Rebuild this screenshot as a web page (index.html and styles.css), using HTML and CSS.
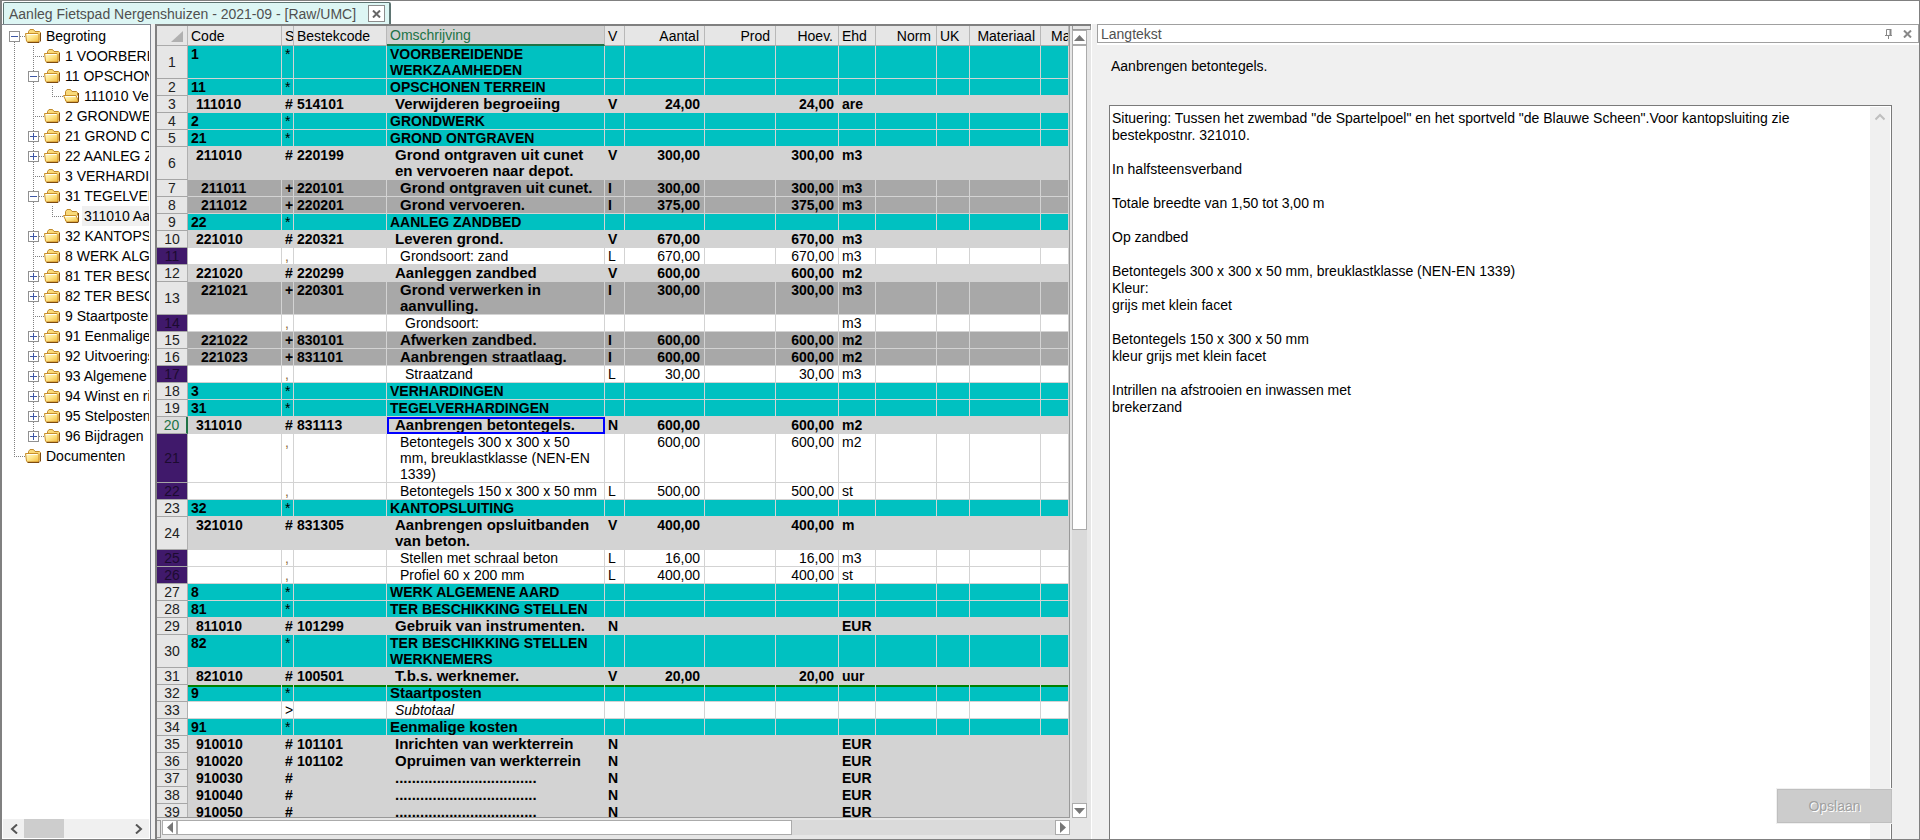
FILE: index.html
```html
<!DOCTYPE html>
<html lang="nl">
<head>
<meta charset="utf-8">
<title>Aanleg Fietspad Nergenshuizen - 2021-09 - [Raw/UMC]</title>
<link rel="stylesheet" href="styles.css">
</head>
<body>
<svg class="defs" aria-hidden="true">
  <defs>
    <linearGradient id="gold" x1="0" y1="0" x2="1" y2="1">
      <stop offset="0" stop-color="#fffbd8"/><stop offset=".5" stop-color="#fde488"/><stop offset="1" stop-color="#f2b93a"/>
    </linearGradient>
    <symbol id="folder" viewBox="0 0 17 14">
      <path d="M3.5 10.500V2.500L5 .5h3.500L10 2.500h4.500l1 1v8" fill="#f9d978" stroke="#c08a2a"/>
      <path d="M.5 4.500h12.500l1 1v6.500l-1 1H2.500l-1-1z" fill="url(#gold)" stroke="#c98f28"/>
      <path d="M2.500 13.500H14l1.500-1.500V4" fill="none" stroke="#7d4a10"/>
      <path d="M2 5.500h10.500" stroke="#fffef0"/>
    </symbol>
    <symbol id="folder-open" viewBox="0 0 17 14">
      <path d="M2.500 12V2.500L4 .5h3.500L9 2.500h4.500l1 1v3" fill="#f9d978" stroke="#c08a2a"/>
      <path d="M.5 6.500h12.500l2.500 5.500-1 1H3.500z" fill="url(#gold)" stroke="#c98f28"/>
      <path d="M3.500 13.500H15l.5-1.500V4" fill="none" stroke="#7d4a10"/>
      <path d="M2 7.500h10.500" stroke="#fffef0"/>
    </symbol>
  </defs>
</svg>
<div class="app">
  <header class="tabs">
    <div class="tab">
      <span class="tab-title">Aanleg Fietspad Nergenshuizen - 2021-09 - [Raw/UMC]</span>
      <button class="tab-close" aria-label="Sluiten"><svg width="9" height="8" viewBox="0 0 9 8"><path d="M1 0.500l7 7M8 .5l-7 7" stroke="#666" stroke-width="2"/></svg></button>
    </div>
  </header>
  <main class="panes">
    <nav class="tree" aria-label="Begroting">
      <div class="tree-view">
        <ul class="root">
          <li><div class="node"><button class="toggle" aria-label="Inklappen"></button><i class="dots short"></i><svg class="icon"><use href="#folder"/></svg><span>Begroting</span></div>
            <ul class="level">
              <li><div class="node"><i class="dots"></i><svg class="icon"><use href="#folder"/></svg><span>1 VOORBEREIDENDE</span></div></li>
              <li><div class="node"><button class="toggle" aria-label="Inklappen"></button><i class="dots short"></i><svg class="icon"><use href="#folder"/></svg><span>11 OPSCHONEN TERREIN</span></div>
                <ul class="level"><li><div class="node"><i class="dots"></i><svg class="icon"><use href="#folder-open"/></svg><span>111010 Verwijderen</span></div></li></ul></li>
              <li><div class="node"><i class="dots"></i><svg class="icon"><use href="#folder"/></svg><span>2 GRONDWERK</span></div></li>
              <li><div class="node"><button class="toggle plus" aria-label="Uitklappen"></button><i class="dots short"></i><svg class="icon"><use href="#folder"/></svg><span>21 GROND ONTGRAVEN</span></div></li>
              <li><div class="node"><button class="toggle plus" aria-label="Uitklappen"></button><i class="dots short"></i><svg class="icon"><use href="#folder"/></svg><span>22 AANLEG ZANDBED</span></div></li>
              <li><div class="node"><i class="dots"></i><svg class="icon"><use href="#folder"/></svg><span>3 VERHARDINGEN</span></div></li>
              <li><div class="node"><button class="toggle" aria-label="Inklappen"></button><i class="dots short"></i><svg class="icon"><use href="#folder"/></svg><span>31 TEGELVERHARDINGEN</span></div>
                <ul class="level"><li><div class="node"><i class="dots"></i><svg class="icon"><use href="#folder-open"/></svg><span class="current">311010 Aanbrengen</span></div></li></ul></li>
              <li><div class="node"><button class="toggle plus" aria-label="Uitklappen"></button><i class="dots short"></i><svg class="icon"><use href="#folder"/></svg><span>32 KANTOPSLUITING</span></div></li>
              <li><div class="node"><i class="dots"></i><svg class="icon"><use href="#folder"/></svg><span>8 WERK ALGEMENE AARD</span></div></li>
              <li><div class="node"><button class="toggle plus" aria-label="Uitklappen"></button><i class="dots short"></i><svg class="icon"><use href="#folder"/></svg><span>81 TER BESCHIKKING</span></div></li>
              <li><div class="node"><button class="toggle plus" aria-label="Uitklappen"></button><i class="dots short"></i><svg class="icon"><use href="#folder"/></svg><span>82 TER BESCHIKKING</span></div></li>
              <li><div class="node"><i class="dots"></i><svg class="icon"><use href="#folder"/></svg><span>9 Staartposten</span></div></li>
              <li><div class="node"><button class="toggle plus" aria-label="Uitklappen"></button><i class="dots short"></i><svg class="icon"><use href="#folder"/></svg><span>91 Eenmalige kosten</span></div></li>
              <li><div class="node"><button class="toggle plus" aria-label="Uitklappen"></button><i class="dots short"></i><svg class="icon"><use href="#folder"/></svg><span>92 Uitvoeringskosten</span></div></li>
              <li><div class="node"><button class="toggle plus" aria-label="Uitklappen"></button><i class="dots short"></i><svg class="icon"><use href="#folder"/></svg><span>93 Algemene kosten</span></div></li>
              <li><div class="node"><button class="toggle plus" aria-label="Uitklappen"></button><i class="dots short"></i><svg class="icon"><use href="#folder"/></svg><span>94 Winst en risico</span></div></li>
              <li><div class="node"><button class="toggle plus" aria-label="Uitklappen"></button><i class="dots short"></i><svg class="icon"><use href="#folder"/></svg><span>95 Stelposten</span></div></li>
              <li><div class="node"><button class="toggle plus" aria-label="Uitklappen"></button><i class="dots short"></i><svg class="icon"><use href="#folder"/></svg><span>96 Bijdragen</span></div></li>
            </ul></li>
          <li><div class="node"><i class="dots"></i><svg class="icon"><use href="#folder"/></svg><span>Documenten</span></div></li>
        </ul>
      </div>
      <div class="tree-scroll">
        <button aria-label="Links"><svg width="8" height="10" viewBox="0 0 8 10"><path d="M7 0.500L2 5l5 4.500" fill="none" stroke="#555" stroke-width="2"/></svg></button>
        <div class="tree-track"><div class="tree-thumb"></div></div>
        <button aria-label="Rechts"><svg width="8" height="10" viewBox="0 0 8 10"><path d="M1 0.500L6 5l-5 4.500" fill="none" stroke="#555" stroke-width="2"/></svg></button>
      </div>
    </nav>
    <div class="gutter"></div>
    <section class="sheet" aria-label="Begrotingsregels">
      <div class="sheet-view">
        <table>
          <colgroup><col class="c-nr"><col class="c-code"><col class="c-s"><col class="c-bestek"><col class="c-oms"><col class="c-v"><col class="c-aantal"><col class="c-prod"><col class="c-hoev"><col class="c-ehd"><col class="c-norm"><col class="c-uk"><col class="c-prod"><col></colgroup>
          <thead>
            <tr><th class="corner"><svg width="12" height="11" viewBox="0 0 12 11"><path d="M12 0v11H0z" fill="#b0b0b0"/></svg></th><th>Code</th><th class="tight">S</th><th>Bestekcode</th><th class="active">Omschrijving</th><th>V</th><th class="num">Aantal</th><th class="num">Prod</th><th class="num">Hoev.</th><th>Ehd</th><th class="num">Norm</th><th>UK</th><th class="num">Materiaal</th><th class="last">Ma</th></tr>
          </thead>
          <tbody>
            <tr class="chapter"><th>1<td>1<td>*<td><td>VOORBEREIDENDE WERKZAAMHEDEN<td><td><td><td><td><td><td><td><td></tr>
            <tr class="chapter"><th>2<td>11<td>*<td><td>OPSCHONEN TERREIN<td><td><td><td><td><td><td><td><td></tr>
            <tr class="item"><th>3<td>111010<td>#<td>514101<td>Verwijderen begroeiing<td>V<td>24,00<td><td>24,00<td>are<td><td><td><td></tr>
            <tr class="chapter"><th>4<td>2<td>*<td><td>GRONDWERK<td><td><td><td><td><td><td><td><td></tr>
            <tr class="chapter"><th>5<td>21<td>*<td><td>GROND ONTGRAVEN<td><td><td><td><td><td><td><td><td></tr>
            <tr class="item"><th>6<td>211010<td>#<td>220199<td>Grond ontgraven uit cunet en vervoeren naar depot.<td>V<td>300,00<td><td>300,00<td>m3<td><td><td><td></tr>
            <tr class="item sub"><th>7<td>211011<td>+<td>220101<td>Grond ontgraven uit cunet.<td>I<td>300,00<td><td>300,00<td>m3<td><td><td><td></tr>
            <tr class="item sub"><th>8<td>211012<td>+<td>220201<td>Grond vervoeren.<td>I<td>375,00<td><td>375,00<td>m3<td><td><td><td></tr>
            <tr class="chapter"><th>9<td>22<td>*<td><td>AANLEG ZANDBED<td><td><td><td><td><td><td><td><td></tr>
            <tr class="item"><th>10<td>221010<td>#<td>220321<td>Leveren grond.<td>V<td>670,00<td><td>670,00<td>m3<td><td><td><td></tr>
            <tr class="detail"><th>11<td><td>,<td><td>Grondsoort: zand<td>L<td>670,00<td><td>670,00<td>m3<td><td><td><td></tr>
            <tr class="item"><th>12<td>221020<td>#<td>220299<td>Aanleggen zandbed<td>V<td>600,00<td><td>600,00<td>m2<td><td><td><td></tr>
            <tr class="item sub"><th>13<td>221021<td>+<td>220301<td>Grond verwerken in aanvulling.<td>I<td>300,00<td><td>300,00<td>m3<td><td><td><td></tr>
            <tr class="detail deep"><th>14<td><td>,<td><td>Grondsoort:<td><td><td><td><td>m3<td><td><td><td></tr>
            <tr class="item sub"><th>15<td>221022<td>+<td>830101<td>Afwerken zandbed.<td>I<td>600,00<td><td>600,00<td>m2<td><td><td><td></tr>
            <tr class="item sub"><th>16<td>221023<td>+<td>831101<td>Aanbrengen straatlaag.<td>I<td>600,00<td><td>600,00<td>m2<td><td><td><td></tr>
            <tr class="detail deep"><th>17<td><td>,<td><td>Straatzand<td>L<td>30,00<td><td>30,00<td>m3<td><td><td><td></tr>
            <tr class="chapter"><th>18<td>3<td>*<td><td>VERHARDINGEN<td><td><td><td><td><td><td><td><td></tr>
            <tr class="chapter"><th>19<td>31<td>*<td><td>TEGELVERHARDINGEN<td><td><td><td><td><td><td><td><td></tr>
            <tr class="item chosen"><th>20<td>311010<td>#<td>831113<td>Aanbrengen betontegels.<td>N<td>600,00<td><td>600,00<td>m2<td><td><td><td></tr>
            <tr class="detail"><th>21<td><td>,<td><td>Betontegels 300 x 300 x 50 mm, breuklastklasse (NEN-EN 1339)<td><td>600,00<td><td>600,00<td>m2<td><td><td><td></tr>
            <tr class="detail"><th>22<td><td>,<td><td>Betontegels 150 x 300 x 50 mm<td>L<td>500,00<td><td>500,00<td>st<td><td><td><td></tr>
            <tr class="chapter"><th>23<td>32<td>*<td><td>KANTOPSLUITING<td><td><td><td><td><td><td><td><td></tr>
            <tr class="item"><th>24<td>321010<td>#<td>831305<td>Aanbrengen opsluitbanden van beton.<td>V<td>400,00<td><td>400,00<td>m<td><td><td><td></tr>
            <tr class="detail"><th>25<td><td>,<td><td>Stellen met schraal beton<td>L<td>16,00<td><td>16,00<td>m3<td><td><td><td></tr>
            <tr class="detail"><th>26<td><td>,<td><td>Profiel 60 x 200 mm<td>L<td>400,00<td><td>400,00<td>st<td><td><td><td></tr>
            <tr class="chapter"><th>27<td>8<td>*<td><td>WERK ALGEMENE AARD<td><td><td><td><td><td><td><td><td></tr>
            <tr class="chapter"><th>28<td>81<td>*<td><td>TER BESCHIKKING STELLEN<td><td><td><td><td><td><td><td><td></tr>
            <tr class="item"><th>29<td>811010<td>#<td>101299<td>Gebruik van instrumenten.<td>N<td><td><td><td>EUR<td><td><td><td></tr>
            <tr class="chapter"><th>30<td>82<td>*<td><td>TER BESCHIKKING STELLEN WERKNEMERS<td><td><td><td><td><td><td><td><td></tr>
            <tr class="item"><th>31<td>821010<td>#<td>100501<td>T.b.s. werknemer.<td>V<td>20,00<td><td>20,00<td>uur<td><td><td><td></tr>
            <tr class="chapter mixed ruled"><th>32<td>9<td>*<td><td>Staartposten<td><td><td><td><td><td><td><td><td></tr>
            <tr class="subtotal"><th>33<td><td>&gt;<td><td>Subtotaal<td><td><td><td><td><td><td><td><td></tr>
            <tr class="chapter mixed"><th>34<td>91<td>*<td><td>Eenmalige kosten<td><td><td><td><td><td><td><td><td></tr>
            <tr class="item"><th>35<td>910010<td>#<td>101101<td>Inrichten van werkterrein<td>N<td><td><td><td>EUR<td><td><td><td></tr>
            <tr class="item"><th>36<td>910020<td>#<td>101102<td>Opruimen van werkterrein<td>N<td><td><td><td>EUR<td><td><td><td></tr>
            <tr class="item"><th>37<td>910030<td>#<td><td>..................................<td>N<td><td><td><td>EUR<td><td><td><td></tr>
            <tr class="item"><th>38<td>910040<td>#<td><td>..................................<td>N<td><td><td><td>EUR<td><td><td><td></tr>
            <tr class="item"><th>39<td>910050<td>#<td><td>..................................<td>N<td><td><td><td>EUR<td><td><td><td></tr>
          </tbody>
        </table>
      </div>
      <div class="vbar">
        <div class="split-h"></div>
        <button aria-label="Omhoog"><svg width="11" height="6" viewBox="0 0 11 6"><path d="M0 6L5.500 0 11 6z" fill="#777"/></svg></button>
        <div class="vtrack"><div class="vthumb"></div></div>
        <button aria-label="Omlaag"><svg width="11" height="6" viewBox="0 0 11 6"><path d="M0 0l5.500 6L11 0z" fill="#777"/></svg></button>
      </div>
      <div class="hbar">
        <div class="split-v"></div>
        <button aria-label="Naar links"><svg width="6" height="11" viewBox="0 0 6 11"><path d="M6 0L0 5.500 6 11z" fill="#777"/></svg></button>
        <div class="htrack"><div class="hthumb"></div></div>
        <button aria-label="Naar rechts"><svg width="6" height="11" viewBox="0 0 6 11"><path d="M0 0l6 5.500L0 11z" fill="#777"/></svg></button>
      </div>
    </section>
    <aside class="side">
      <div class="side-head">
        <span>Langtekst</span>
        <button aria-label="Vastzetten"><svg width="8" height="10" viewBox="0 0 8 10"><path d="M1.500 6V.5h4V6M0 6.500h7M3.500 6.500V10" fill="none" stroke="#888"/><path d="M5.500 0v6" stroke="#888" stroke-width="2"/></svg></button>
        <button aria-label="Sluiten"><svg width="9" height="8" viewBox="0 0 9 8"><path d="M1 0.500l7 7M8 .5l-7 7" stroke="#888" stroke-width="2"/></svg></button>
      </div>
      <div class="side-body">
        <label class="side-label" for="langtekst">Aanbrengen betontegels.</label>
        <div class="editor">
          <textarea id="langtekst" spellcheck="false">Situering: Tussen het zwembad "de Spartelpoel" en het sportveld "de Blauwe Scheen".Voor kantopsluiting zie bestekpostnr. 321010.

In halfsteensverband

Totale breedte van 1,50 tot 3,00 m

Op zandbed

Betontegels 300 x 300 x 50 mm, breuklastklasse (NEN-EN 1339)
Kleur:
grijs met klein facet

Betontegels 150 x 300 x 50 mm
kleur grijs met klein facet

Intrillen na afstrooien en inwassen met
brekerzand</textarea>
          <div class="editor-bar"><svg width="10" height="8" viewBox="0 0 10 8"><path d="M.5 6.500L5 2l4.500 4.500" fill="none" stroke="#bfbfbf" stroke-width="2"/></svg></div>
          <button class="save" disabled>Opslaan</button>
        </div>
      </div>
    </aside>
  </main>
</div>
</body>
</html>
```
FILE: styles.css
```css
* { box-sizing: border-box; }

body {
  margin: 0;
  font: 14px/16px "Liberation Sans", Arial, sans-serif;
  color: #000;
  background: #fff;
}

button {
  display: flex;
  align-items: center;
  justify-content: center;
  padding: 0;
  border: 0;
  background: none;
  font: inherit;
}

.defs { position: absolute; width: 0; height: 0; }

.app {
  display: flex;
  flex-direction: column;
  height: 100vh;
  border: 1px solid #808080;
  border-left-width: 2px;
  overflow: hidden;
}

/* Document tabs */
.tabs {
  display: flex;
  flex: 0 0 23px;
  padding: 1px 1px 0;
}
.tab {
  display: flex;
  align-items: center;
  gap: 12px;
  padding: 0 4px 0 5px;
  background: #ddf6f4;
  border: 1px solid #5f7573;
  border-width: 1px 2px 0 1px;
  border-radius: 2px 2px 0 0;
}
.tab-title { color: #505050; white-space: nowrap; }
.tab-close {
  width: 17px;
  height: 17px;
  border: 1px solid #8c8c8c;
  background: #fff;
}

.panes {
  flex: 1;
  min-height: 0;
  display: grid;
  grid-template-columns: 149px 4px minmax(0, 936fr) minmax(0, 828fr);
  grid-template-rows: minmax(0, 1fr);
}
.gutter { background: #f0f0f0; }

/* Tree */
.tree {
  display: flex;
  flex-direction: column;
  min-width: 0;
  min-height: 0;
  border: 1px solid #828790;
  border-width: 1px 1px 0 0;
  padding: 1px;
}
.tree-view { flex: 1; overflow: hidden; padding-left: 6px; }
.tree ul {
  margin: 0;
  padding: 0;
  list-style: none;
  background: repeating-linear-gradient(#808080 0 1px, transparent 1px 2px) 5px 0 / 1px calc(100% - 10px) no-repeat;
}
.tree .level { margin-left: 19px; }
.tree .root { background-position: 5px 10px; background-size: 1px calc(100% - 20px); }
.node {
  display: flex;
  align-items: center;
  height: 20px;
  white-space: nowrap;
}
.node span {
  min-width: 0;
  margin-left: 2px;
  padding: 2px 0 2px 2px;
  overflow: hidden;
}
.node .current { background: #f0f0f0; }
.toggle {
  flex: none;
  width: 11px;
  height: 11px;
  border: 1px solid #919191;
  background: linear-gradient(90deg, #3d57a5, #3d57a5) center / 7px 1px no-repeat #fff;
}
.toggle.plus {
  background: linear-gradient(#3d57a5, #3d57a5) center / 7px 1px no-repeat, linear-gradient(#3d57a5, #3d57a5) center / 1px 7px no-repeat #fff;
}
.dots {
  flex: none;
  width: 11px;
  height: 1px;
  margin-left: 5px;
  background: repeating-linear-gradient(90deg, #808080 0 1px, transparent 1px 2px);
}
.dots.short { width: 5px; margin-left: 0; }
.icon { flex: none; width: 17px; height: 14px; }

.tree-scroll { display: flex; height: 19px; background: #f0f0f0; }
.tree-scroll button { width: 21px; }
.tree-track { flex: 1; }
.tree-thumb { width: 38%; height: 100%; background: #cdcdcd; }

/* Spreadsheet */
.sheet {
  display: grid;
  grid-template-columns: minmax(0, 1fr) 21px;
  grid-template-rows: minmax(0, 1fr) 21px;
  border: 2px solid #808080;
  border-width: 2px 0 0 2px;
  background: #e6e6e6;
}
.sheet-view {
  overflow: hidden;
  border: 1px solid #999;
  border-width: 0 1px 1px 0;
}
table {
  width: 100%;
  table-layout: fixed;
  border-collapse: separate;
  border-spacing: 0;
}
.c-nr { width: 31px; }
.c-code { width: 94px; }
.c-s { width: 12px; }
.c-bestek { width: 93px; }
.c-oms { width: 218px; }
.c-v { width: 20px; }
.c-aantal { width: 80px; }
.c-prod { width: 71px; }
.c-hoev { width: 63px; }
.c-ehd { width: 37px; }
.c-norm { width: 61px; }
.c-uk { width: 33px; }

th, td { padding: 0 3px; text-align: left; overflow: hidden; }
th { font-weight: normal; background: #e6e6e6; }
thead th {
  height: 20px;
  border-right: 1px solid #b8b8b8;
  border-bottom: 1px solid #ababab;
  white-space: nowrap;
}
thead .corner { padding: 2px 4px 0; text-align: right; }
thead .tight { padding-right: 0; }
thead .num { text-align: right; padding-right: 5px; }
thead .last { padding-left: 10px; padding-right: 0; }
thead .active {
  color: #217346;
  background: #d2d2d2;
  border-bottom: 2px solid #217346;
}
tbody tr { height: 17px; }
tbody th {
  text-align: center;
  color: #222;
  border-right: 1px solid #b0b0b0;
  border-bottom: 1px solid #a6a6a6;
}
td {
  vertical-align: top;
  background: #fff;
  border-right: 1px solid #d3d3d3;
  border-bottom: 1px solid #d3d3d3;
}
td:nth-child(3) { padding-right: 0; }
td:nth-child(7), td:nth-child(9) { text-align: right; padding-right: 4px; }

.chapter td { background: #00c1c1; font-weight: bold; }
.chapter td:nth-child(3) { font-weight: normal; }
.item td { background: #d3d3d3; font-weight: bold; }
.item td:nth-child(2), .item td:nth-child(5) { padding-left: 8px; }
.item td:nth-child(5), .mixed td:nth-child(5) { font-size: 15px; }
.sub td { background: #a8a8a8; }
.sub td:nth-child(2), .sub td:nth-child(5), .detail td:nth-child(5) { padding-left: 13px; }
.detail td:nth-child(5) { padding-right: 5px; }
.deep td:nth-child(5) { padding-left: 18px; }
.detail td:nth-child(3) { color: #8a6a3c; }
.detail th { background: #40196b; color: #1c0b30; }
.subtotal td:nth-child(5) { padding-left: 8px; font-style: italic; }
.chosen th { color: #217346; background: #dcdcdc; border-right: 2px solid #217346; }
.chosen td:nth-child(5) { outline: 2px solid #00f; outline-offset: -2px; }
.ruled td { box-shadow: inset 0 2px 0 #008000; }

.vbar {
  display: flex;
  flex-direction: column;
  align-items: flex-start;
  padding-left: 2px;
}
.vbar button, .hbar button {
  flex: none;
  width: 15px;
  height: 15px;
  border: 1px solid #ababab;
  background: #fff;
}
.split-h {
  align-self: stretch;
  height: 4px;
  border: 1px solid #999;
  border-top: 0;
}
.vtrack { flex: 1; width: 15px; background: #dadada; }
.vthumb { height: 64%; border: 1px solid #ababab; background: #fff; }
.hbar { display: flex; padding-top: 2px; }
.split-v {
  width: 4px;
  height: 18px;
  margin-right: 1px;
  border: 1px solid #999;
  border-left: 0;
}
.htrack { flex: 1; height: 15px; background: #dadada; }
.hthumb { width: 70%; height: 100%; border: 1px solid #ababab; background: #fff; }

/* Long text panel */
.side {
  display: flex;
  flex-direction: column;
  min-width: 0;
  padding-left: 5px;
  background: #f0f0f0;
  border-left: 1px solid #fff;
}
.side-head {
  display: flex;
  align-items: center;
  gap: 10px;
  flex: 0 0 19px;
  padding: 0 6px 0 3px;
  border: 1px solid #a0a0a0;
  background: #fff;
  color: #505050;
}
.side-head span { flex: 1; }
.side-body {
  flex: 1;
  min-height: 0;
  display: flex;
  flex-direction: column;
  padding: 13px 27px 0 12px;
  border-top: 2px solid #fff;
}
.side-label { flex: 0 0 47px; padding: 0 2px; }
.editor {
  position: relative;
  flex: 1;
  display: flex;
  min-height: 0;
  padding: 1px 1px 0 0;
  border: 1px solid #7a7a7a;
  border-bottom: 0;
  background: #fff;
}
textarea {
  flex: 1;
  min-width: 0;
  padding: 3px 2px 2px;
  border: 0;
  outline: 0;
  resize: none;
  overflow: hidden;
  font: 14px/17px "Liberation Sans", Arial, sans-serif;
  background: #fff;
}
.editor-bar {
  display: flex;
  justify-content: center;
  width: 20px;
  padding-top: 6px;
  background: #f0f0f0;
}
.save {
  position: absolute;
  right: -1px;
  bottom: 16px;
  width: 115px;
  height: 34px;
  border: 1px solid #bfbfbf;
  outline: 1px solid #f0f0f0;
  background: #ccc;
  color: #a0a0a0;
  text-shadow: 1px 1px 0 #fff;
}
```
